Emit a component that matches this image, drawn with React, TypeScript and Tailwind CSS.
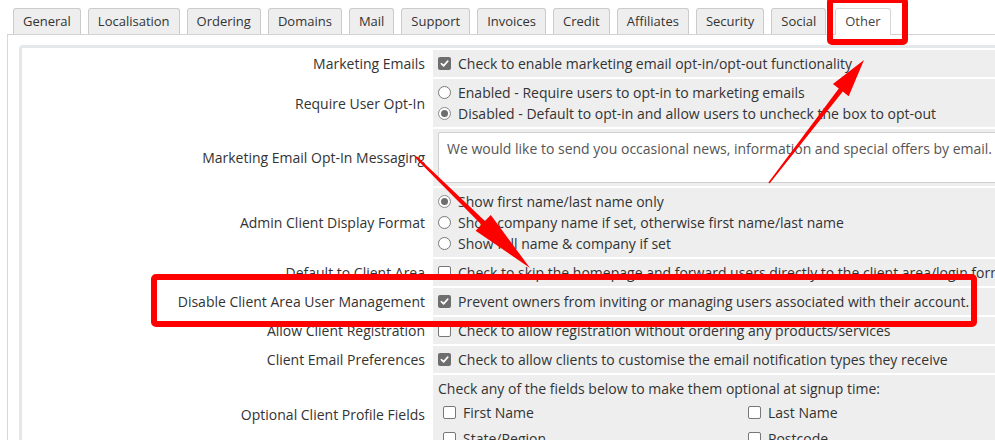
import type { ReactNode } from "react";

const tabs = [
  "General",
  "Localisation",
  "Ordering",
  "Domains",
  "Mail",
  "Support",
  "Invoices",
  "Credit",
  "Affiliates",
  "Security",
  "Social",
  "Other",
];

function Checkbox({ checked = false }: { checked?: boolean }) {
  if (checked) {
    return (
      <span className="flex h-[13px] w-[13px] shrink-0 items-center justify-center rounded-[2px] bg-[#6e6e6e]">
        <svg width="9" height="9" viewBox="0 0 10 10" fill="none">
          <path d="M1.5 5.2 4 7.6 8.6 2.4" stroke="#fff" strokeWidth="1.8" strokeLinecap="round" strokeLinejoin="round" />
        </svg>
      </span>
    );
  }
  return <span className="h-[13px] w-[13px] shrink-0 rounded-[2px] border border-[#777] bg-white" />;
}

function Radio({ checked = false }: { checked?: boolean }) {
  return (
    <span
      className={
        checked
          ? "flex h-[13px] w-[13px] shrink-0 items-center justify-center rounded-full border border-[#8a8a8a] bg-white"
          : "h-[13px] w-[13px] shrink-0 rounded-full border border-[#777] bg-white"
      }
    >
      {checked && <span className="h-[7px] w-[7px] rounded-full bg-[#6e6e6e]" />}
    </span>
  );
}

function Option({ control, children }: { control: ReactNode; children: ReactNode }) {
  return (
    <div className="flex items-center gap-[7px] whitespace-nowrap">
      {control}
      <span>{children}</span>
    </div>
  );
}

function Row({ label, children }: { label: string; children: ReactNode }) {
  return (
    <>
      <div className="flex items-center justify-end bg-white pr-[6px] text-right">{label}</div>
      <div className="bg-[#eeeeee] px-[5px] py-[3px]">{children}</div>
    </>
  );
}

export default function App() {
  return (
    <div className="relative h-[440px] w-[995px] overflow-hidden bg-white font-['Open_Sans',sans-serif] text-[14px] leading-[21px] text-[#333]">
      <div className="pl-[7px] pt-2">
        <ul className="flex items-end gap-[7px] border-b border-[#d2d2d2] pl-[6px]">
          {tabs.map((t) =>
            t === "Other" ? (
              <li
                key={t}
                className="-mb-px ml-[2px] h-[27px] rounded-t-[3px] border border-b-0 border-[#d6d6d6] bg-white px-[9px] text-[13px] leading-[25px] text-[#444]"
              >
                {t}
              </li>
            ) : (
              <li
                key={t}
                className="h-[26px] rounded-t-[3px] border border-b-0 border-[#cbcbcb] bg-[#eeeeee] px-[9px] text-[13px] leading-[25px] text-[#333]"
              >
                {t}
              </li>
            )
          )}
        </ul>

        <div className="border-l border-[#d8d8d8] pl-[11px] pt-[10px]">
          <div className="w-max rounded-[4px] border-[3px] border-[#e4e8eb] bg-white">
            <div className="grid grid-cols-[407px_720px] gap-[2px] p-[2px]">
              <Row label="Marketing Emails">
                <Option control={<Checkbox checked />}>
                  Check to enable marketing email opt-in/opt-out functionality
                </Option>
              </Row>

              <Row label="Require User Opt-In">
                <Option control={<Radio />}>Enabled - Require users to opt-in to marketing emails</Option>
                <Option control={<Radio checked />}>
                  Disabled - Default to opt-in and allow users to uncheck the box to opt-out
                </Option>
              </Row>

              <Row label="Marketing Email Opt-In Messaging">
                <div className="h-[51px] w-[620px] rounded-[2px] border border-[#cfcfcf] bg-white px-[8px] pt-[5px] text-[#555]">
                  We would like to send you occasional news, information and special offers by email.
                </div>
              </Row>

              <Row label="Admin Client Display Format">
                <Option control={<Radio checked />}>Show first name/last name only</Option>
                <Option control={<Radio />}>Show company name if set, otherwise first name/last name</Option>
                <Option control={<Radio />}>Show full name &amp; company if set</Option>
              </Row>

              <Row label="Default to Client Area">
                <Option control={<Checkbox />}>
                  Check to skip the homepage and forward users directly to the client area/login form
                </Option>
              </Row>

              <Row label="Disable Client Area User Management">
                <Option control={<Checkbox checked />}>
                  Prevent owners from inviting or managing users associated with their account.
                </Option>
              </Row>

              <Row label="Allow Client Registration">
                <Option control={<Checkbox />}>Check to allow registration without ordering any products/services</Option>
              </Row>

              <Row label="Client Email Preferences">
                <Option control={<Checkbox checked />}>
                  Check to allow clients to customise the email notification types they receive
                </Option>
              </Row>

              <Row label="Optional Client Profile Fields">
                <div>Check any of the fields below to make them optional at signup time:</div>
                <div className="grid grid-cols-[305px_305px] pl-[5px]">
                  <div className="flex h-[26px] items-center">
                    <Option control={<Checkbox />}>First Name</Option>
                  </div>
                  <div className="flex h-[26px] items-center">
                    <Option control={<Checkbox />}>Last Name</Option>
                  </div>
                  <div className="flex h-[26px] items-center">
                    <Option control={<Checkbox />}>State/Region</Option>
                  </div>
                  <div className="flex h-[26px] items-center">
                    <Option control={<Checkbox />}>Postcode</Option>
                  </div>
                </div>
              </Row>
            </div>
          </div>
        </div>
      </div>

      {/* red call-outs drawn over the settings */}
      <div className="pointer-events-none absolute left-[827px] top-[-3px] h-[48px] w-[81px] rounded-[5px] border-[6px] border-[#ff0000]" />
      <div className="pointer-events-none absolute left-[151px] top-[274px] h-[53px] w-[826px] rounded-[5px] border-[6px] border-[#ff0000]" />

      <svg className="pointer-events-none absolute left-0 top-0" width="995" height="440" viewBox="0 0 995 440">
        <polygon
          fill="#ff0000"
          points="769.6,183.5 842.8,91.6 848.7,96.2 864,60 832.9,84 838.8,88.6 768.4,182.5"
        />
        <polygon
          fill="#ff0000"
          points="415.2,157.8 481.5,224.7 475.6,230.8 530,268 490.8,215 484.9,221.1 416.8,156.2"
        />
      </svg>
    </div>
  );
}
